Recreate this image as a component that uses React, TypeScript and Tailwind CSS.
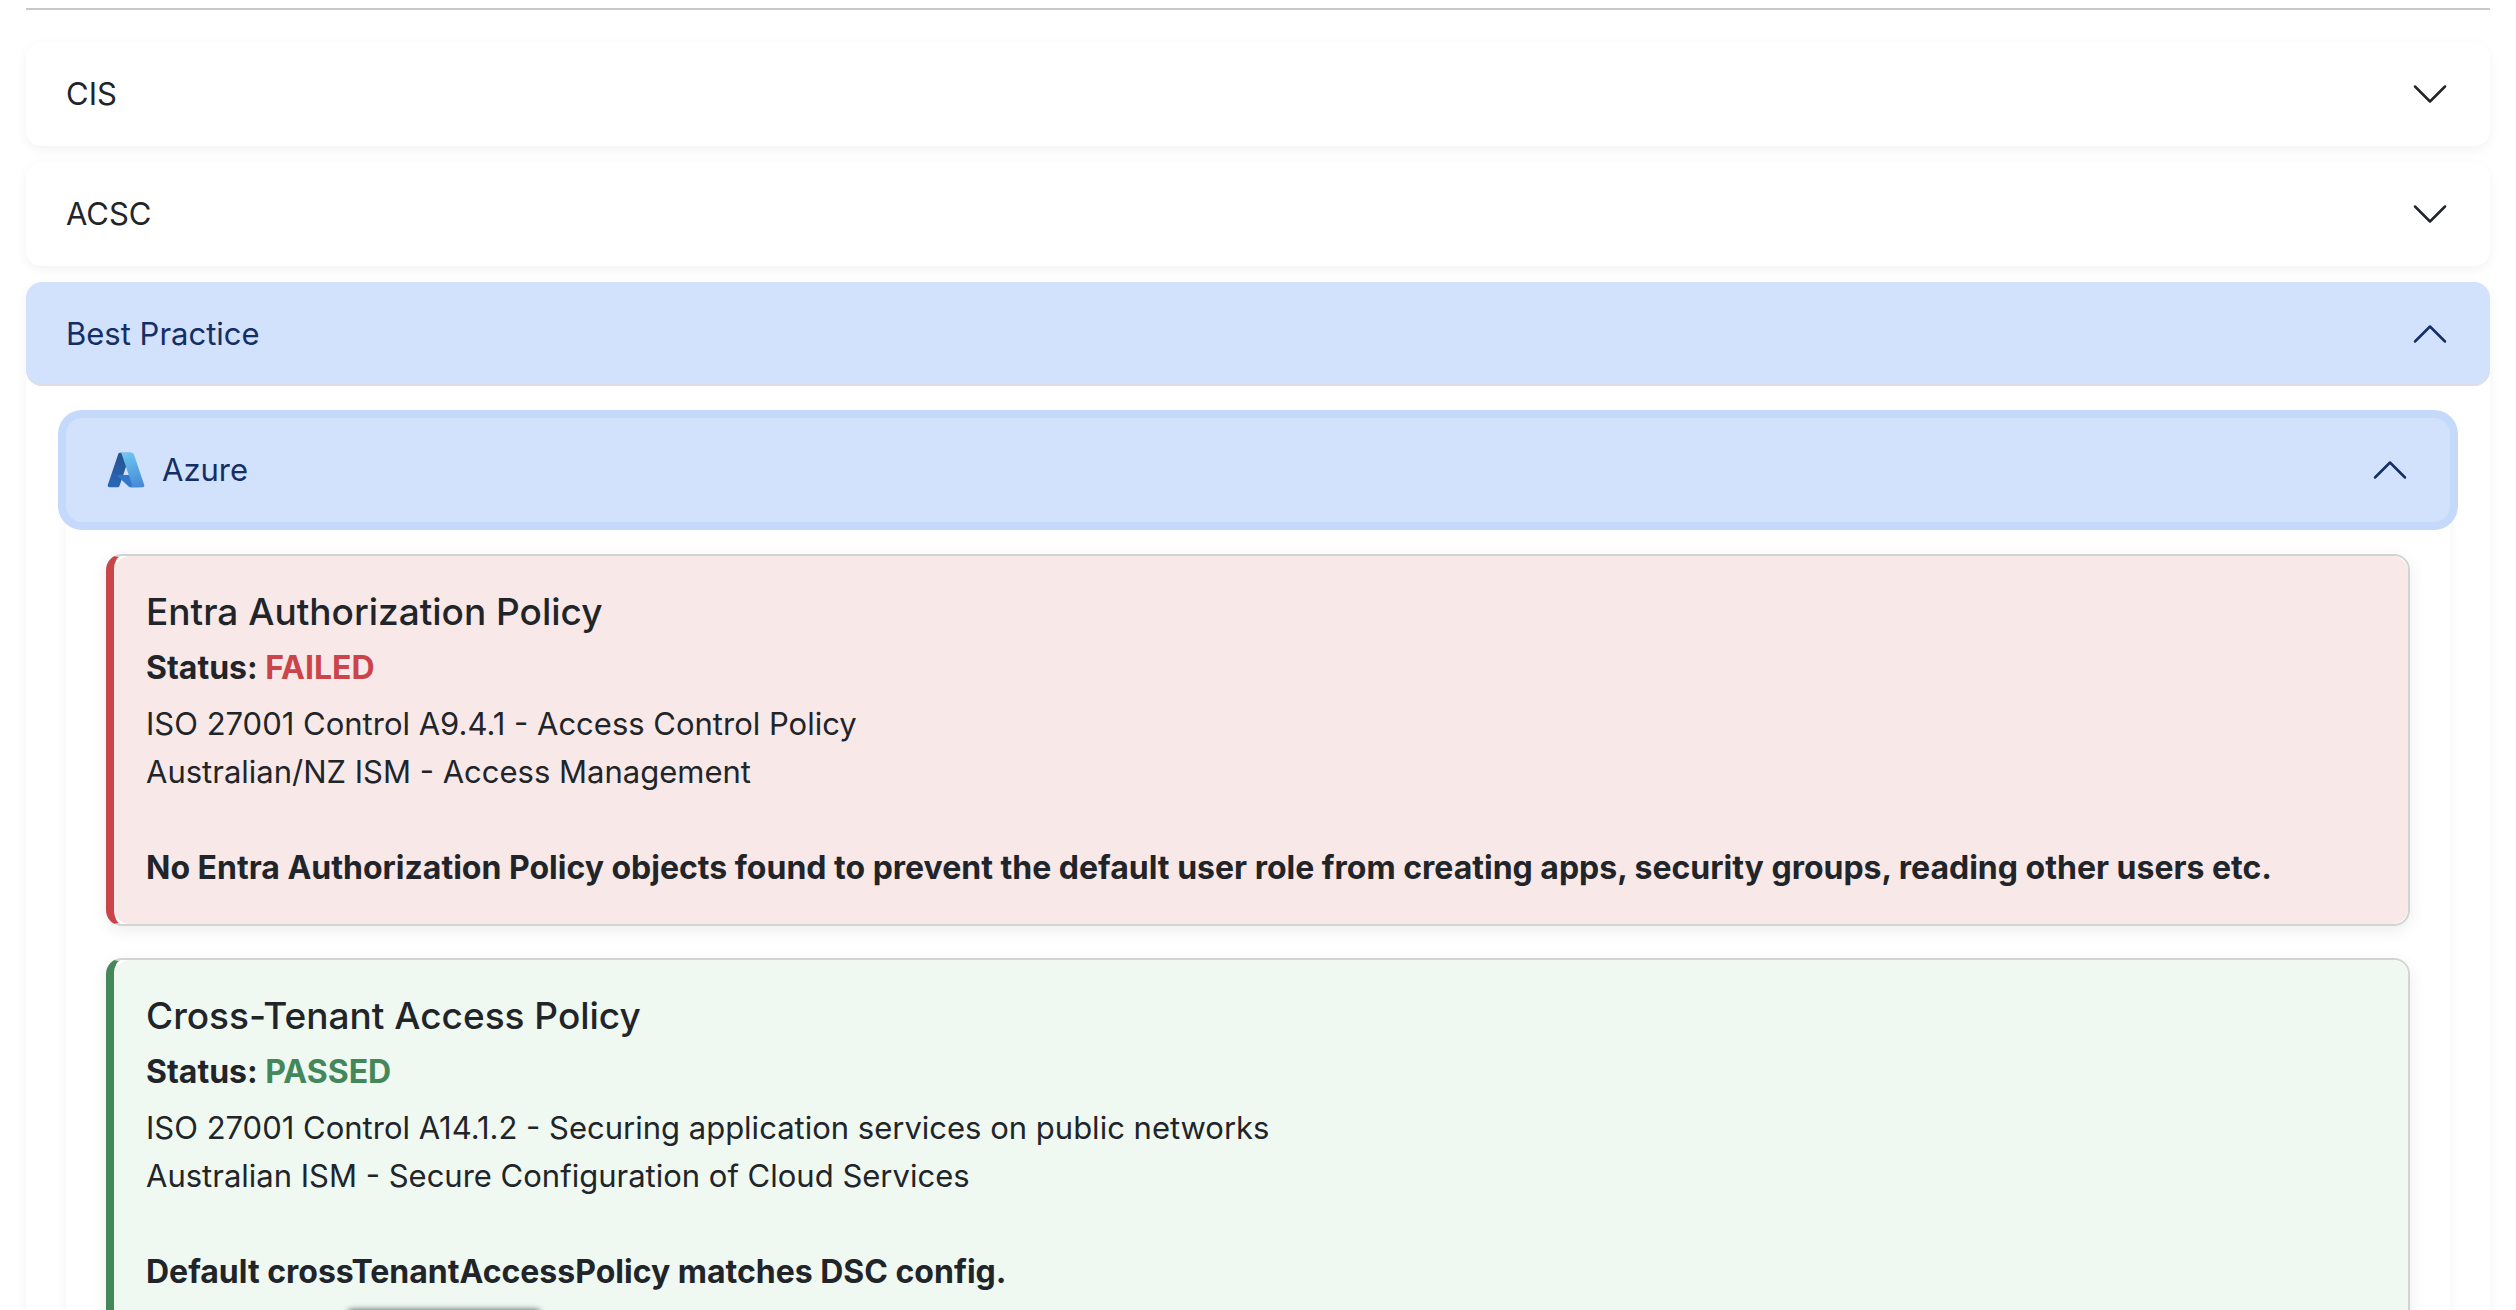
import { useState, type ReactNode } from "react";

function Chevron({ open }: { open: boolean }) {
  return (
    <svg
      className={`size-10 shrink-0 ${open ? "rotate-180" : ""}`}
      viewBox="0 0 16 16"
      fill="none"
      stroke="currentColor"
      strokeLinecap="round"
      strokeLinejoin="round"
      aria-hidden="true"
    >
      <path d="m2 5 6 6 6-6" />
    </svg>
  );
}

function AzureLogo() {
  return (
    <svg className="size-10 shrink-0" viewBox="0 0 96 96" aria-hidden="true">
      <defs>
        <linearGradient id="az-left" x1="46.97" y1="7.41" x2="25.16" y2="90" gradientUnits="userSpaceOnUse">
          <stop offset="0" stopColor="#25508d" />
          <stop offset="1" stopColor="#2b67b8" />
        </linearGradient>
        <linearGradient id="az-right" x1="45.85" y1="4.67" x2="71.4" y2="91" gradientUnits="userSpaceOnUse">
          <stop offset="0" stopColor="#6cc9f0" />
          <stop offset="1" stopColor="#4689d6" />
        </linearGradient>
      </defs>
      <path
        fill="url(#az-left)"
        d="M33.34 6.54h26.04l-27.03 80.1a4.15 4.15 0 0 1-3.94 2.81H8.15a4.14 4.14 0 0 1-3.93-5.47L29.4 9.38a4.15 4.15 0 0 1 3.94-2.83z"
      />
      <path
        fill="#3277cb"
        d="M71.17 60.26H29.88a1.91 1.91 0 0 0-1.3 3.31l26.53 24.76a4.17 4.17 0 0 0 2.85 1.13h23.38z"
      />
      <path
        fill="url(#az-right)"
        d="M66.6 9.36a4.14 4.14 0 0 0-3.93-2.82H33.65a4.15 4.15 0 0 1 3.93 2.82l25.18 74.62a4.15 4.15 0 0 1-3.93 5.48h29.02a4.15 4.15 0 0 0 3.93-5.48z"
      />
    </svg>
  );
}

function AccordionItem({
  title,
  icon,
  defaultOpen = false,
  focused = false,
  children,
}: {
  title: string;
  icon?: ReactNode;
  defaultOpen?: boolean;
  focused?: boolean;
  children?: ReactNode;
}) {
  const [open, setOpen] = useState(defaultOpen);
  const openStyles = focused
    ? "bg-[#d2e1fc] text-[#142f65] ring-8 ring-[#c5dafa]"
    : "bg-[#d2e1fc] text-[#142f65] shadow-[inset_0_-2px_0_#dcdfe5]";
  const closedStyles = "bg-white text-[#212529]";

  return (
    <section className="rounded-2xl bg-white shadow-[0_4px_12px_rgba(0,0,0,0.05)]">
      <h2>
        <button
          type="button"
          aria-expanded={open}
          onClick={() => setOpen(!open)}
          className={`flex h-26 w-full cursor-pointer items-center justify-between rounded-2xl px-10 text-left outline-none ${
            open ? openStyles : closedStyles
          }`}
        >
          <span className="flex items-center gap-4">
            {icon}
            {title}
          </span>
          <Chevron open={open} />
        </button>
      </h2>
      {open && <div className="px-10 py-8">{children}</div>}
    </section>
  );
}

function PolicyCard({
  title,
  status,
  controls,
  result,
}: {
  title: string;
  status: "FAILED" | "PASSED";
  controls: string[];
  result: string;
}) {
  const failed = status === "FAILED";

  return (
    <article
      className={`rounded-2xl border-2 border-l-8 border-[#d2d3d3] bg-white shadow-[0_4px_16px_rgba(0,0,0,0.08)] ${
        failed ? "border-l-[#cb444a]" : "border-l-[#44875a]"
      }`}
    >
      <div className={`rounded-2xl p-8 ${failed ? "bg-[#f8e8e8]" : "bg-[#eff8f1]"}`}>
        <h3 className="mb-2 text-[37px] leading-12 font-medium">{title}</h3>
        <p className="mb-2 text-[32px] leading-12 font-bold">
          Status:{" "}
          <span className={failed ? "text-[#cb444a]" : "text-[#44875a]"}>{status}</span>
        </p>
        {controls.map((control) => (
          <p key={control}>{control}</p>
        ))}
        <p className="mt-12 text-[32px] leading-12 font-bold">{result}</p>
      </div>
    </article>
  );
}

export default function App() {
  return (
    <main className="relative h-screen overflow-hidden bg-white px-[26px] pt-2 font-['Inter',sans-serif] text-[31px] leading-12 text-[#212529]">
      <hr className="mb-8 border-t-2 border-[#c8c8c8]" />
      <div className="flex flex-col gap-4">
        <AccordionItem title="CIS" />
        <AccordionItem title="ACSC" />
        <AccordionItem title="Best Practice" defaultOpen>
          <AccordionItem title="Azure" icon={<AzureLogo />} defaultOpen focused>
            <div className="flex flex-col gap-8">
              <PolicyCard
                title="Entra Authorization Policy"
                status="FAILED"
                controls={[
                  "ISO 27001 Control A9.4.1 - Access Control Policy",
                  "Australian/NZ ISM - Access Management",
                ]}
                result="No Entra Authorization Policy objects found to prevent the default user role from creating apps, security groups, reading other users etc."
              />
              <PolicyCard
                title="Cross-Tenant Access Policy"
                status="PASSED"
                controls={[
                  "ISO 27001 Control A14.1.2 - Securing application services on public networks",
                  "Australian ISM - Secure Configuration of Cloud Services",
                ]}
                result="Default crossTenantAccessPolicy matches DSC config."
              />
            </div>
          </AccordionItem>
        </AccordionItem>
      </div>
      {/* floating bar docked just below the fold, only its shadow shows */}
      <div className="absolute top-full left-[348px] h-10 w-48 rounded-sm shadow-[0_0_6px_rgba(0,0,0,0.7)]" />
    </main>
  );
}
